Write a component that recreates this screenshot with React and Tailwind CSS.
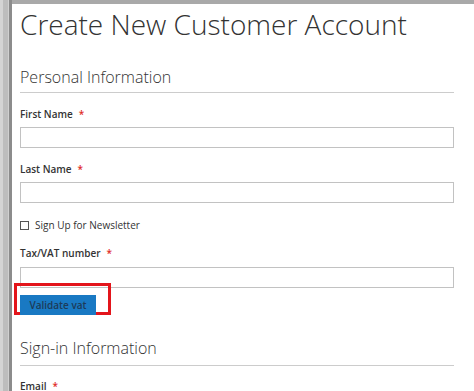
import React from "react";

const font = { fontFamily: '"Open Sans", "Noto Sans", sans-serif' };

function Label({ children, required = true }) {
  return (
    <div className="flex items-center h-[12px] text-[10px] font-semibold text-[#333] leading-none">
      <span>{children}</span>
      {required && <span className="ml-[6px] text-[#e02b27] text-[10px]">*</span>}
    </div>
  );
}

function Input() {
  return <div className="h-[21px] border border-[#c2c2c2] bg-white" />;
}

export default function App() {
  return (
    <div className="flex w-[474px] h-[391px] overflow-hidden bg-white" style={font}>
      <div className="flex w-[12px] shrink-0">
        <div className="w-[3px] bg-[#d4d4d4]" />
        <div className="w-[5px] bg-[#bdbdbd]" />
        <div className="w-[1px] bg-[#d0d0d0]" />
        <div className="w-[3px] bg-[#8c8c8c]" />
      </div>
      <div className="flex flex-col flex-1">
        <div className="h-[4px] bg-[#a9a9a9] shrink-0" />
        <div className="flex flex-col pl-[8px] pr-[20px]">
          <h1 className="mt-[2px] text-[28px] font-light leading-[36px] text-[#333]">
            Create New Customer Account
          </h1>
          <div className="mt-[25px] text-[16px] font-light leading-[20px] text-[#333]">
            Personal Information
          </div>
          <div className="mt-[5px] h-px bg-[#cccccc]" />
          <div className="mt-[15px]">
            <Label>First Name</Label>
          </div>
          <div className="mt-[7px]"><Input /></div>
          <div className="mt-[15px]">
            <Label>Last Name</Label>
          </div>
          <div className="mt-[7px]"><Input /></div>
          <div className="mt-[16px] flex items-center h-[12px]">
            <div className="w-[9px] h-[9px] border border-[#555] bg-white" />
            <span className="ml-[6px] text-[10px] text-[#333] leading-none">Sign Up for Newsletter</span>
          </div>
          <div className="mt-[16px]">
            <Label>Tax/VAT number</Label>
          </div>
          <div className="mt-[8px]"><Input /></div>
          <div className="relative mt-[3px] h-[20px]">
            <div className="absolute left-[-6px] top-[-8px] w-[97px] h-[32px] border-[3px] border-[#e3151b]" />
            <button className="relative w-[76px] h-[20px] bg-[#1979c3] text-[10px] font-semibold text-[#1d3b58] leading-none">
              Validate vat
            </button>
          </div>
          <div className="mt-[27px] text-[16px] font-light leading-[20px] text-[#333]">
            Sign-in Information
          </div>
          <div className="mt-[7px] h-px bg-[#cccccc]" />
          <div className="mt-[14px]">
            <Label>Email</Label>
          </div>
        </div>
      </div>
    </div>
  );
}
